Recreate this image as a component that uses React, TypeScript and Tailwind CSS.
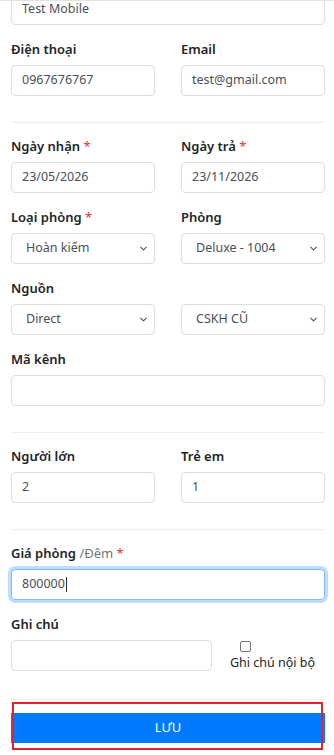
import { ChevronDown } from "lucide-react";

const font = { fontFamily: '"Noto Sans", "Liberation Sans", sans-serif' };

function Label({ text, required, suffix }: { text: string; required?: boolean; suffix?: string }) {
  return (
    <label className="mb-[6px] block h-[20px] text-[13px] font-semibold leading-[20px] text-[#212529]">
      {text}
      {suffix && <span className="font-normal text-[#6c757d]"> {suffix}</span>}
      {required && <span className="font-normal text-[#e3342f]"> *</span>}
    </label>
  );
}

function TextBox({ value, focused }: { value?: string; focused?: boolean }) {
  return (
    <div
      className={
        focused
          ? "flex h-[31px] w-full items-center rounded-[4px] border border-[#80bdff] bg-white px-[10px] text-[12.5px] text-[#495057] shadow-[0_0_0_3px_rgba(0,123,255,0.25)]"
          : "flex h-[31px] w-full items-center rounded-[4px] border border-[#dcdfe3] bg-white px-[10px] text-[12.5px] text-[#495057]"
      }
    >
      <span>{value}</span>
      {focused && <span className="ml-px h-[15px] w-px bg-[#333]" />}
    </div>
  );
}

function SelectBox({ value }: { value: string }) {
  return (
    <div className="flex h-[31px] w-full items-center justify-between rounded-[4px] border border-[#dcdfe3] bg-white pl-[14px] pr-[5px] text-[12.5px] text-[#495057]">
      <span>{value}</span>
      <ChevronDown className="h-[11px] w-[11px] text-[#555]" strokeWidth={2.5} aria-hidden />
    </div>
  );
}

function Pair({ children }: { children: React.ReactNode }) {
  return <div className="grid grid-cols-2 gap-x-[26px]">{children}</div>;
}

function Group({ children }: { children: React.ReactNode }) {
  return <div className="mb-[14px]">{children}</div>;
}

function Divider() {
  return <hr className="mb-[13px] mt-[12px] border-0 border-t border-[#eceeef]" />;
}

export default function App() {
  return (
    <div className="min-h-[755px] border-t border-[#e3e3e3] bg-white" style={font}>
      <div className="flex flex-col overflow-hidden pb-[13px] pl-[11px] pr-[9px]">
        <div className="-mt-[7px] flex flex-col">
          <Group>
            <TextBox value="Test Mobile" />
          </Group>
          <Pair>
            <Group>
              <Label text="Điện thoại" />
              <TextBox value="0967676767" />
            </Group>
            <Group>
              <Label text="Email" />
              <TextBox value="test@gmail.com" />
            </Group>
          </Pair>
        </div>

        <Divider />

        <Pair>
          <Group>
            <Label text="Ngày nhận" required />
            <TextBox value="23/05/2026" />
          </Group>
          <Group>
            <Label text="Ngày trả" required />
            <TextBox value="23/11/2026" />
          </Group>
        </Pair>
        <Pair>
          <Group>
            <Label text="Loại phòng" required />
            <SelectBox value="Hoàn kiếm" />
          </Group>
          <Group>
            <Label text="Phòng" />
            <SelectBox value="Deluxe - 1004" />
          </Group>
        </Pair>
        <Group>
          <Label text="Nguồn" />
          <Pair>
            <SelectBox value="Direct" />
            <SelectBox value="CSKH CŨ" />
          </Pair>
        </Group>
        <Group>
          <Label text="Mã kênh" />
          <TextBox />
        </Group>

        <Divider />

        <Pair>
          <Group>
            <Label text="Người lớn" />
            <TextBox value="2" />
          </Group>
          <Group>
            <Label text="Trẻ em" />
            <TextBox value="1" />
          </Group>
        </Pair>

        <Divider />

        <Group>
          <Label text="Giá phòng" suffix="/Đêm" required />
          <TextBox value="800000" focused />
        </Group>
        <Group>
          <Label text="Ghi chú" />
          <div className="flex items-start">
            <div className="w-[201px] shrink-0">
              <TextBox />
            </div>
            <div className="ml-[18px] flex flex-col">
              <span className="ml-[10px] mt-[1px] h-[11px] w-[11px] rounded-[2px] border border-[#767676] bg-white" />
              <span className="mt-[1px] text-[12.5px] leading-[20px] text-[#212529]">Ghi chú nội bộ</span>
            </div>
          </div>
        </Group>

        <Divider />

        <div className="relative">
          <button className="block h-[30px] w-full bg-[#007bff] text-[13px] text-white">LƯU</button>
          <div className="pointer-events-none absolute -bottom-[7px] -top-[11px] left-px right-[2px] border-2 border-[#e5232b]" />
        </div>
      </div>
    </div>
  );
}
